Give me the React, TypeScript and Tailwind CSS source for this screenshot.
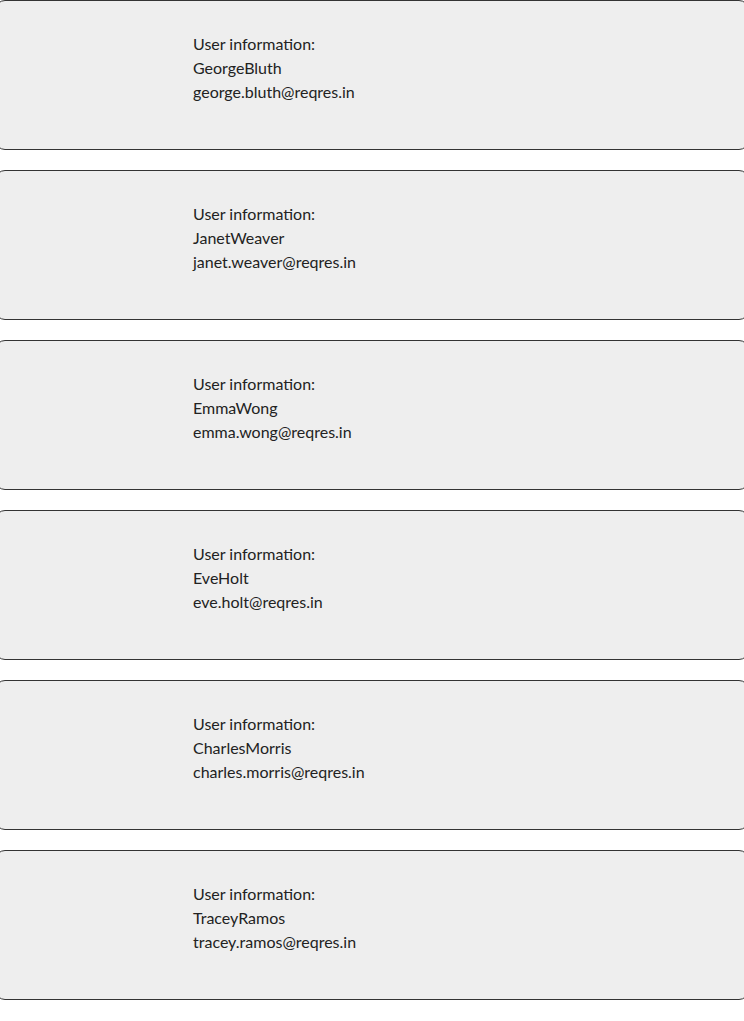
const users = [
  { name: 'GeorgeBluth', email: 'george.bluth@reqres.in' },
  { name: 'JanetWeaver', email: 'janet.weaver@reqres.in' },
  { name: 'EmmaWong', email: 'emma.wong@reqres.in' },
  { name: 'EveHolt', email: 'eve.holt@reqres.in' },
  { name: 'CharlesMorris', email: 'charles.morris@reqres.in' },
  { name: 'TraceyRamos', email: 'tracey.ramos@reqres.in' },
];

export default function App() {
  return (
    <div className="min-h-screen bg-white overflow-hidden font-['Lato','Liberation_Sans',sans-serif] text-[16px] leading-6 text-[#222]">
      <div className="flex flex-col gap-5 mx-[-5px]">
        {users.map((u) => (
          <div
            key={u.email}
            className="h-[150px] rounded-[10px] border border-[#333] bg-[#eeeeee] pl-[197px] pt-[31px]"
          >
            <p>User information:</p>
            <p>{u.name}</p>
            <p>{u.email}</p>
          </div>
        ))}
      </div>
    </div>
  );
}
